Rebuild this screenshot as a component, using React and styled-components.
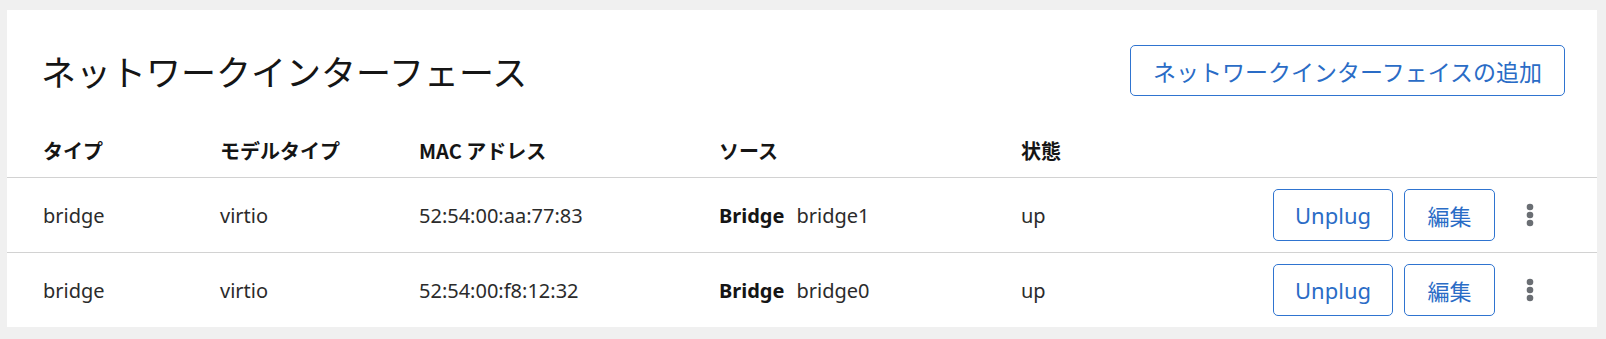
import React from 'react'
import styled, { createGlobalStyle } from 'styled-components'

const GlobalStyle = createGlobalStyle`
    html, body {
        margin: 0;
        padding: 0;
        background: #f0f0f0;
    }
    body {
        font-family: "Noto Sans", "Noto Sans CJK JP", sans-serif;
        color: #151515;
    }
`

const Card = styled.section`
    margin: 10px 9px 12px 7px;
    background: #ffffff;
`

const TitleRow = styled.div`
    display: flex;
    justify-content: space-between;
    align-items: center;
    padding: 35px 32px 0 34px;
`

const Title = styled.h2`
    margin: 0;
    font-family: "Noto Sans CJK JP", sans-serif;
    font-size: 35px;
    font-weight: 400;
    line-height: 51px;
    color: #151515;
`

const Button = styled.button`
    display: inline-flex;
    align-items: center;
    justify-content: center;
    height: ${p => p.tall ? 51 : 52}px;
    padding: 0 ${p => p.pad || 23}px;
    border: 1px solid #2f74d0;
    border-radius: 5px;
    background: #ffffff;
    color: #2a6cc6;
    font-family: "Noto Sans", "Noto Sans CJK JP", sans-serif;
    font-size: ${p => p.fs || 22}px;
    cursor: pointer;
    white-space: nowrap;
`

const Grid = styled.div`
    display: grid;
    grid-template-columns: 177px 199px 300px 302px 1fr auto;
    align-items: center;
    padding: 0 43px 0 36px;
    border-bottom: ${p => p.last ? 'none' : '1px solid #d2d2d2'};
`

const HeadRow = styled(Grid)`
    margin-top: 23px;
    height: 58px;
    font-family: "Noto Sans CJK JP", sans-serif;
    font-size: 20px;
    font-weight: 700;
    span { padding-top: 4px; }
`

const Row = styled(Grid)`
    height: 74px;
    font-size: 20px;
    color: #2b2b2b;
`

const Cell = styled.span`
    white-space: nowrap;
`

const Strong = styled.b`
    font-weight: 700;
    margin-right: 12px;
    color: #151515;
`

const Actions = styled.div`
    display: flex;
    align-items: center;
    gap: 11px;
`

const Kebab = styled.button`
    width: 48px;
    height: 52px;
    display: flex;
    align-items: center;
    justify-content: center;
    border: none;
    background: transparent;
    cursor: pointer;
`

const rows = [
    { type: 'bridge', model: 'virtio', mac: '52:54:00:aa:77:83', src: 'bridge1', state: 'up' },
    { type: 'bridge', model: 'virtio', mac: '52:54:00:f8:12:32', src: 'bridge0', state: 'up' },
]

const Dots = () => (
    <svg width="8" height="24" viewBox="0 0 8 24">
        <circle cx="4" cy="4" r="3.3" fill="#6a6e73" />
        <circle cx="4" cy="12" r="3.3" fill="#6a6e73" />
        <circle cx="4" cy="20" r="3.3" fill="#6a6e73" />
    </svg>
)

const App = () => {
    return (
        <>
            <GlobalStyle />
            <Card>
                <TitleRow>
                    <Title>ネットワークインターフェース</Title>
                    <Button tall pad={22} fs={23}>ネットワークインターフェイスの追加</Button>
                </TitleRow>
                <HeadRow>
                    <Cell>タイプ</Cell>
                    <Cell>モデルタイプ</Cell>
                    <Cell>MAC アドレス</Cell>
                    <Cell>ソース</Cell>
                    <Cell>状態</Cell>
                    <Cell />
                </HeadRow>
                {rows.map((r, i) => (
                    <Row key={r.mac} last={i === rows.length - 1}>
                        <Cell>{r.type}</Cell>
                        <Cell>{r.model}</Cell>
                        <Cell>{r.mac}</Cell>
                        <Cell><Strong>Bridge</Strong>{r.src}</Cell>
                        <Cell>{r.state}</Cell>
                        <Actions>
                            <Button pad={22} style={{ width: 120 }}>Unplug</Button>
                            <Button pad={22} style={{ width: 91 }}>編集</Button>
                            <Kebab aria-label="actions"><Dots /></Kebab>
                        </Actions>
                    </Row>
                ))}
            </Card>
        </>
    )
}

export default App
